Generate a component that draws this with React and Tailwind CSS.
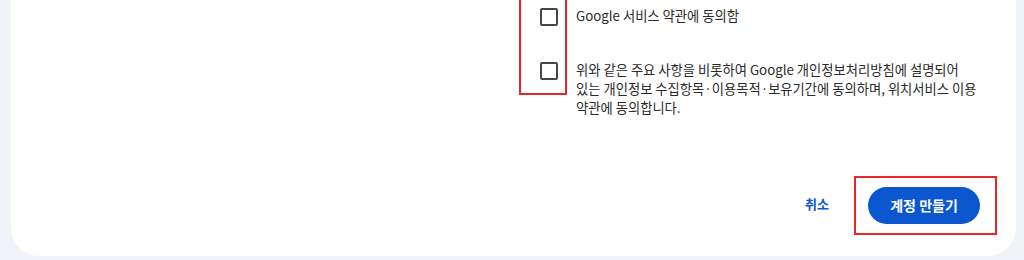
import React, { useState } from 'react';

const font = { fontFamily: '"Noto Sans CJK KR", "Noto Sans", sans-serif' };

function Box({ checked, onClick }) {
  return (
    <button
      type="button"
      onClick={onClick}
      className="w-[18px] h-[18px] rounded-[2px] border-2 border-[#444746] bg-white flex items-center justify-center"
    >
      {checked && <span className="w-[8px] h-[8px] bg-[#444746]" />}
    </button>
  );
}

export default function App() {
  const [terms, setTerms] = useState(false);
  const [privacy, setPrivacy] = useState(false);

  return (
    <div className="h-[260px] bg-[#f0f4f9] pl-[11px] pr-[8px] pb-[4px]" style={font}>
      <div className="h-full bg-white rounded-b-[28px] flex flex-col">
        {/* Consent checkboxes */}
        <div className="flex pl-[508px]">
          <div className="w-[48px] h-[95px] border-2 border-t-0 border-[#e5262b] flex flex-col gap-[36px] pl-[19px] pt-[8px]">
            <Box checked={terms} onClick={() => setTerms(!terms)} />
            <Box checked={privacy} onClick={() => setPrivacy(!privacy)} />
          </div>
          <div className="ml-[9px] text-[13.3px] text-[#2a2a2a]">
            <p className="leading-[20px] mt-[6px] whitespace-nowrap">Google 서비스 약관에 동의함</p>
            <p className="leading-[19px] mt-[34px] whitespace-nowrap">
              위와 같은 주요 사항을 비롯하여 Google 개인정보처리방침에 설명되어
              <br />
              있는 개인정보 수집항목·이용목적·보유기간에 동의하며, 위치서비스 이용
              <br />
              약관에 동의합니다.
            </p>
          </div>
        </div>

        {/* Actions */}
        <div className="flex items-center justify-end mt-auto mb-[21px] mr-[19px]">
          <button type="button" className="text-[13px] font-semibold text-[#0b57d0] mr-[25px] mb-[4px]">
            취소
          </button>
          <div className="border-2 border-[#e5262b] pl-[12px] pr-[15px] py-[9px]">
            <button
              type="button"
              className="w-[112px] h-[37px] rounded-full bg-[#0b57d0] text-white text-[14px] font-semibold"
            >
              계정 만들기
            </button>
          </div>
        </div>
      </div>
    </div>
  );
}
